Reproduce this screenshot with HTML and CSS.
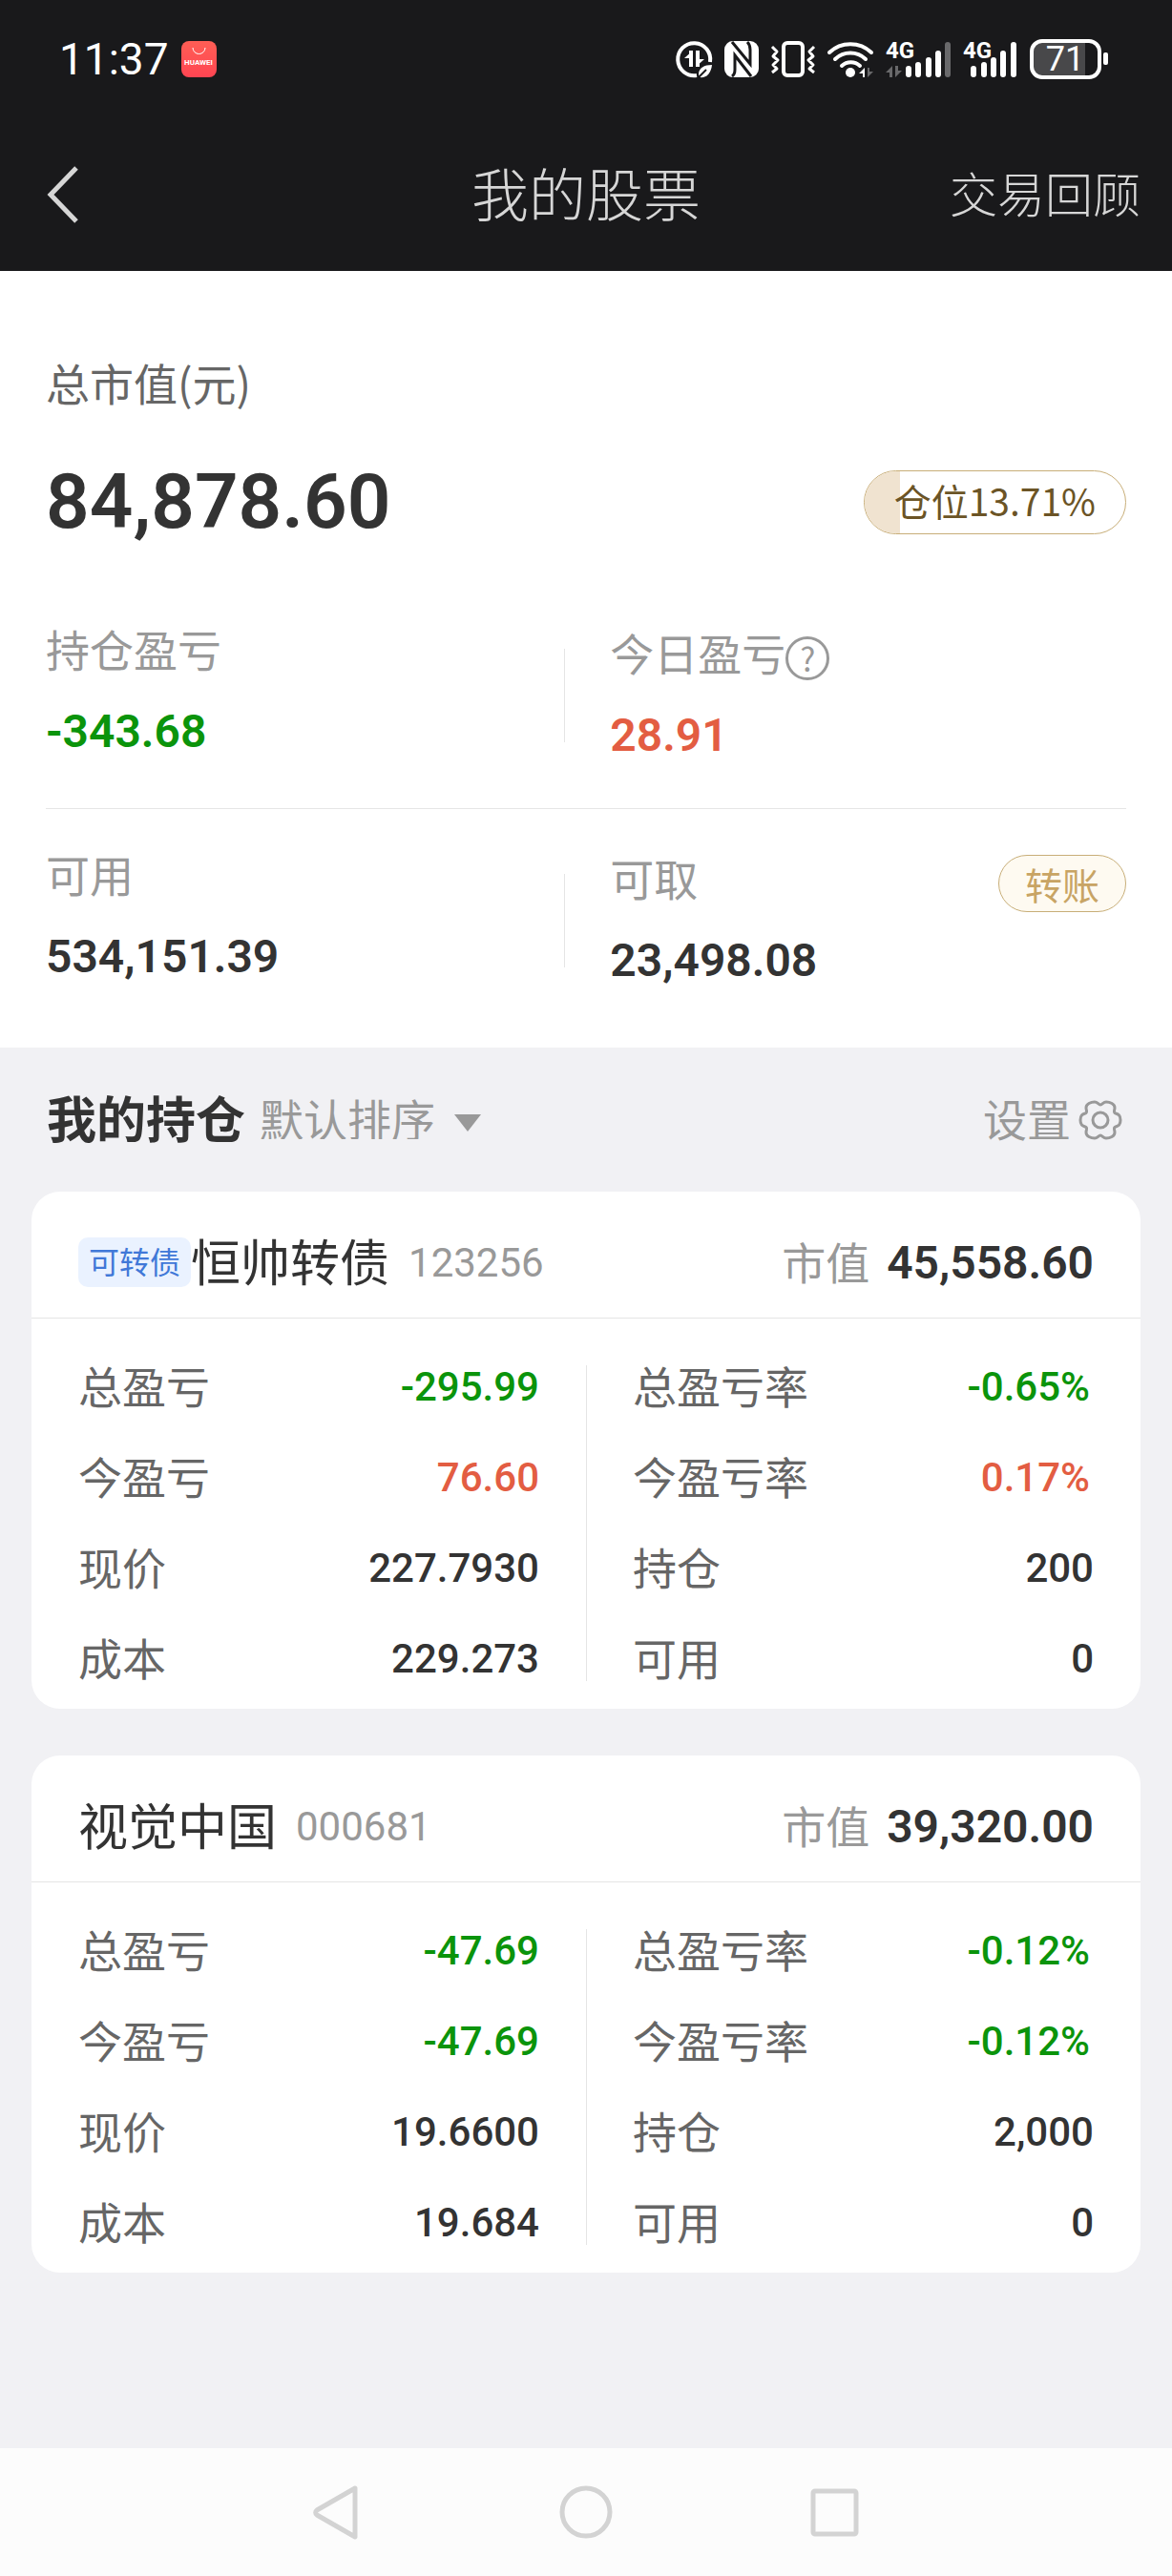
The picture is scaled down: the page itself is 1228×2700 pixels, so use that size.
FILE: index.html
```html
<!DOCTYPE html>
<html lang="zh-CN">
  <head>
    <meta charset="UTF-8" />
    <meta name="viewport" content="width=device-width, initial-scale=1.0" />
    <title>我的股票</title>
    <link rel="stylesheet" href="styles.css">
  </head>
  <body>
    <header class="top">
        <div class="status-bar">
            <span class="clock">11:37</span>
            <svg class="app-icon" width="37" height="38" viewBox="0 0 37 38">
                <defs>
                    <linearGradient id="red" x1="0" y1="0" x2="0" y2="1">
                        <stop offset="0" stop-color="#ff5e55" />
                        <stop offset="1" stop-color="#ff4552" />
                    </linearGradient>
                </defs>
                <rect width="37" height="38" rx="8" fill="url(#red)" />
                <path d="M12 7a6 6 0 0 0 13 0" fill="none" stroke="#fff" stroke-width="1" />
                <text x="18" y="25" text-anchor="middle" class="app-name">HUAWEI</text>
            </svg>

            <div class="status-icons">
                <svg width="38" height="39" viewBox="0 0 38 39" fill="none" stroke="#fff">
                    <path d="M36 22A17 17 0 1 0 22 36" stroke-width="4" />
                    <path d="M16 10v17M23 10v17" stroke-width="4" />
                    <path d="M18 10l-9 8h9zM21 27l9-8h-9z" fill="#fff" stroke="none" />
                    <path d="M38 25c-8 0-14 3-14 10l1 3c7 1 12-4 13-13z" fill="#fff" stroke="none" />
                    <path d="M24 38l8-8" stroke="#19191b" stroke-width="2" />
                </svg>
                <svg width="36" height="38" viewBox="0 0 36 38">
                    <rect width="36" height="38" rx="9" fill="#fff" />
                    <path d="M8 1l19 23V9q0-5-3-8M28 37L11 15v15q0 5-3 7" fill="none" stroke="#19191b" stroke-width="3" />
                </svg>
                <svg width="46" height="38" viewBox="0 0 46 38" fill="none" stroke="#fff" stroke-width="4" stroke-linejoin="round">
                    <rect x="13" y="2" width="20" height="34" rx="4" />
                    <path d="M1 6l5 5-4 5 5 4-5 5 4 4-5 4M45 6l-5 5 4 5-5 4 5 5-4 4 5 4" stroke-width="3" />
                </svg>
                <svg width="48" height="39" viewBox="0 0 48 39" fill="none" stroke="#fff" stroke-width="4" stroke-linecap="round">
                    <path d="M2 12a32 32 0 0 1 44 0M8 19a23 23 0 0 1 32 0M15 26a14 14 0 0 1 19 0" />
                    <circle cx="24" cy="33" r="5" fill="#fff" stroke="none" />
                    <path d="M39 28v10h-2v-4h-4z" fill="#fff" stroke="none" />
                    <path d="M42 38V28h2v4h4z" fill="#69696b" stroke="none" />
                </svg>
                <svg width="68" height="39" viewBox="0 0 68 39" stroke="#fff" stroke-width="6" stroke-linecap="round">
                    <text x="0" y="18" class="net">4G</text>
                    <path d="M7 26v12H4v-5H0zM10 38V26h3v5h4z" fill="#69696b" stroke="none" />
                    <path d="M24 29v6M34 25v10M45 20v15M55 13v22" />
                    <path d="M65 4v31" stroke="#69696b" />
                </svg>
                <svg width="57" height="39" viewBox="0 0 57 39" stroke="#fff" stroke-width="6" stroke-linecap="round">
                    <text x="0" y="18" class="net">4G</text>
                    <path d="M11 29v6M22 25v10M32 20v15M42 13v22M53 4v31" />
                </svg>
                <svg width="82" height="42" viewBox="0 0 82 42">
                    <path d="M13 3h45v36H13A10 10 0 0 1 3 29V13A10 10 0 0 1 13 3z" fill="#48484a" />
                    <rect x="2" y="2" width="71" height="38" rx="11" fill="none" stroke="#fff" stroke-width="4" />
                    <rect x="77" y="14" width="5" height="13" rx="2" fill="#fff" />
                    <text x="37" y="33" text-anchor="middle" class="percent">71</text>
                </svg>
            </div>
        </div>

        <nav class="title-bar">
            <button class="back" aria-label="返回">
                <svg width="34" height="60" viewBox="0 0 34 60" fill="none" stroke="#d6d6d6" stroke-width="5">
                    <path d="M31 2L4 30l27 28" />
                </svg>
            </button>
            <h1>我的股票</h1>
            <a class="review" href="#review">交易回顾</a>
        </nav>
    </header>

    <main>
        <section class="summary">
            <div class="total-label">总市值(元)</div>
            <div class="total-row">
                <strong class="total">84,878.60</strong>
                <div class="position"><span class="position-fill" style="width: 13.71%"></span><span class="position-text">仓位13.71%</span></div>
            </div>

            <div class="stats">
                <div class="stat">
                    <div class="stat-label">持仓盈亏</div>
                    <div class="stat-value down">-343.68</div>
                </div>
                <div class="stat">
                    <div class="stat-label">今日盈亏<button class="help" aria-label="说明">?</button></div>
                    <div class="stat-value up">28.91</div>
                </div>
            </div>
            <div class="stats">
                <div class="stat">
                    <div class="stat-label">可用</div>
                    <div class="stat-value">534,151.39</div>
                </div>
                <div class="stat">
                    <div class="stat-label">可取<button class="transfer">转账</button></div>
                    <div class="stat-value">23,498.08</div>
                </div>
            </div>
        </section>

        <section class="holdings">
            <div class="holdings-head">
                <h2>我的持仓</h2>
                <label class="sort">
                    <select aria-label="排序">
                        <option>默认排序</option>
                    </select>
                </label>
                <button class="settings">
                    <span>设置</span>
                    <svg width="46" height="42" viewBox="0 0 46 42" fill="none" stroke="#999" stroke-width="3" stroke-linejoin="round">
                        <path d="M23 5C25 5 26 2 29 2C33 2 38 4 38 8C38 11 36 13 39 14C42 15 44 16 44 21C44 26 42 27 39 28C36 29 38 31 38 34C38 38 33 40 29 40C26 40 25 37 23 37C21 37 20 40 17 40C13 40 8 38 8 34C8 31 10 29 7 28C4 27 2 26 2 21C2 16 4 15 7 14C10 13 8 11 8 8C8 4 13 2 17 2C20 2 21 5 23 5Z" />
                        <circle cx="23" cy="21" r="8" />
                    </svg>
                </button>
            </div>

            <article class="card">
                <div class="card-head">
                    <span class="tag">可转债</span>
                    <h3>恒帅转债</h3>
                    <span class="code">123256</span>
                    <span class="worth-label">市值</span>
                    <strong class="worth">45,558.60</strong>
                </div>
                <div class="card-body">
                    <dl>
                        <div><dt>总盈亏</dt><dd class="down">-295.99</dd></div>
                        <div><dt>今盈亏</dt><dd class="up">76.60</dd></div>
                        <div><dt>现价</dt><dd>227.7930</dd></div>
                        <div><dt>成本</dt><dd>229.273</dd></div>
                    </dl>
                    <dl>
                        <div><dt>总盈亏率</dt><dd class="down rate">-0.65%</dd></div>
                        <div><dt>今盈亏率</dt><dd class="up rate">0.17%</dd></div>
                        <div><dt>持仓</dt><dd>200</dd></div>
                        <div><dt>可用</dt><dd>0</dd></div>
                    </dl>
                </div>
            </article>

            <article class="card">
                <div class="card-head">
                    <h3>视觉中国</h3>
                    <span class="code">000681</span>
                    <span class="worth-label">市值</span>
                    <strong class="worth">39,320.00</strong>
                </div>
                <div class="card-body">
                    <dl>
                        <div><dt>总盈亏</dt><dd class="down">-47.69</dd></div>
                        <div><dt>今盈亏</dt><dd class="down">-47.69</dd></div>
                        <div><dt>现价</dt><dd>19.6600</dd></div>
                        <div><dt>成本</dt><dd>19.684</dd></div>
                    </dl>
                    <dl>
                        <div><dt>总盈亏率</dt><dd class="down rate">-0.12%</dd></div>
                        <div><dt>今盈亏率</dt><dd class="down rate">-0.12%</dd></div>
                        <div><dt>持仓</dt><dd>2,000</dd></div>
                        <div><dt>可用</dt><dd>0</dd></div>
                    </dl>
                </div>
            </article>
        </section>
    </main>

    <footer class="system-nav">
        <button aria-label="返回">
            <svg width="56" height="60" viewBox="0 0 56 60"><path d="M47 5L7 28a3 3 0 0 0 0 5L47 56z" /></svg>
        </button>
        <button aria-label="主屏幕">
            <svg width="56" height="60" viewBox="0 0 56 60"><circle cx="28" cy="30" r="25" /></svg>
        </button>
        <button aria-label="最近任务">
            <svg width="56" height="60" viewBox="0 0 56 60"><rect x="5" y="8" width="45" height="45" rx="2" /></svg>
        </button>
    </footer>
  </body>
</html>
```
FILE: styles.css
```css
* {
    margin: 0;
    padding: 0;
    box-sizing: border-box;
}

body {
    min-height: 100vh;
    display: flex;
    flex-direction: column;
    font-family: "Noto Sans CJK SC", sans-serif;
    font-size: 46px;
    line-height: 1;
    color: #333;
    background: #f1f1f4;
}

main {
    flex: 1;
}

button, select {
    border: none;
    background: none;
    font: inherit;
    color: inherit;
    cursor: pointer;
}

svg {
    display: block;
    flex-shrink: 0;
    overflow: visible;
}

/* header */
.top {
    background: #19191b;
    color: #d6d6d6;
}

.status-bar {
    display: flex;
    align-items: center;
    height: 124px;
    padding: 0 67px 0 62px;
}

.clock {
    font-family: Roboto, sans-serif;
    font-size: 46px;
    color: #fff;
}

.app-icon {
    margin-left: 13px;
}

.app-name {
    font: 700 8px Roboto, sans-serif;
    fill: #fff;
}

.status-icons {
    display: flex;
    align-items: center;
    gap: 13px;
    margin-left: auto;
}

.net {
    font: 700 24px Roboto, sans-serif;
    fill: #fff;
    stroke: none;
}

.percent {
    font: 400 36px Roboto, sans-serif;
    fill: #fff;
}

.title-bar {
    display: grid;
    grid-template-columns: 1fr auto 1fr;
    align-items: center;
    height: 160px;
    padding: 0 33px;
    font-weight: 300;
}

.title-bar h1 {
    padding-bottom: 6px;
    font-size: 60px;
    font-weight: 300;
}

.back {
    justify-self: start;
    margin-left: 16px;
}

.review {
    justify-self: end;
    padding-bottom: 6px;
    font-size: 50px;
    color: inherit;
    text-decoration: none;
}

/* account summary */
.summary {
    padding: 93px 48px 45px;
    background: #fff;
}

.total-label {
    color: #666;
}

.total-row {
    display: flex;
    justify-content: space-between;
    align-items: center;
    height: 100px;
    margin: 53px 0 76px;
}

.total {
    font: 600 80px Roboto, sans-serif;
}

.position {
    position: relative;
    display: flex;
    align-items: center;
    height: 67px;
    padding: 0 31px;
    border: 1px solid #c8ae78;
    border-radius: 34px;
    overflow: hidden;
    font-size: 39px;
    color: #6b5426;
}

.position-fill {
    position: absolute;
    inset: 0 auto 0 0;
    background: #f0e3d0;
}

.position-text {
    position: relative;
    padding-bottom: 4px;
}

.stats {
    display: flex;
    align-items: center;
    padding-bottom: 52px;
}

.stats + .stats {
    padding: 40px 0 22px;
    border-top: 1px solid #e5e5e5;
}

.stat {
    width: 48%;
}

.stat + .stat {
    position: relative;
    flex: 1;
    padding: 8px 0 0 48px;
}

.stat + .stat::before {
    content: "";
    position: absolute;
    left: 0;
    top: 28px;
    height: 98px;
    border-left: 1px solid #e5e5e5;
}

.stat-label {
    display: flex;
    height: 60px;
    color: #999;
}

.stat-value {
    margin-top: 27px;
    font: 600 48px/48px Roboto, sans-serif;
}

.help {
    align-self: center;
    width: 46px;
    height: 46px;
    border: 3px solid #999;
    border-radius: 50%;
    font-size: 34px;
    line-height: 36px;
}

.transfer {
    height: 60px;
    margin-left: auto;
    padding: 0 27px;
    border: 1px solid #c8ae78;
    border-radius: 30px;
    background: #fefaf1;
    font-size: 39px;
    line-height: 52px;
    color: #c8a464;
}

.up {
    color: #e35d42;
}

.down {
    color: #0b940b;
}

/* holdings */
.holdings {
    padding: 0 33px;
}

.holdings-head {
    display: flex;
    align-items: center;
    height: 151px;
    padding: 0 16px;
    color: #999;
}

.holdings-head h2 {
    padding-bottom: 6px;
    font-size: 52px;
    font-weight: 700;
    color: #333;
}

.sort {
    display: flex;
    align-items: center;
    gap: 20px;
    margin-left: 15px;
}

.sort select {
    appearance: none;
    padding-bottom: 6px;
}

.sort::after {
    content: "";
    margin-top: 6px;
    border: 14px solid transparent;
    border-top: 18px solid #999;
    border-bottom: none;
}

.settings {
    display: flex;
    align-items: center;
    gap: 8px;
    margin-left: auto;
    padding-right: 3px;
}

.settings span {
    padding-bottom: 6px;
}

.card {
    margin-bottom: 49px;
    border-radius: 30px;
    background: #fff;
}

.card-head {
    display: flex;
    align-items: center;
    height: 133px;
    padding: 16px 49px 0;
    border-bottom: 1px solid #e5e5e5;
    color: #999;
}

.tag {
    padding: 8px 11px 12px;
    border-radius: 10px;
    background: #eaf2ff;
    font-size: 32px;
    color: #4078d8;
}

.card h3,
.worth-label {
    padding-bottom: 4px;
}

.card h3 {
    font-size: 52px;
    font-weight: 400;
    color: #333;
}

.code {
    margin-left: 20px;
    font: 400 42px Roboto, sans-serif;
}

.worth-label {
    margin-left: auto;
}

.worth {
    margin-left: 18px;
    font: 600 48px Roboto, sans-serif;
    color: #333;
}

.card-body {
    position: relative;
    display: flex;
    padding: 24px 0 5px;
}

.card-body::before {
    content: "";
    position: absolute;
    left: 50%;
    top: 49px;
    bottom: 29px;
    border-left: 1px solid #e5e5e5;
}

.card dl {
    flex: 1;
    padding: 0 49px;
}

.card dl div {
    display: flex;
    justify-content: space-between;
    align-items: center;
    height: 95px;
}

.card dt {
    padding-bottom: 6px;
    color: #666;
}

.card dd {
    font: 500 42px Roboto, sans-serif;
}

.card .rate {
    padding-right: 4px;
}

/* system navigation */
.system-nav {
    display: flex;
    justify-content: center;
    align-items: center;
    gap: 205px;
    height: 134px;
    background: #fcfcfc;
}

.system-nav svg {
    fill: none;
    stroke: #d3d3d3;
    stroke-width: 5;
    stroke-linejoin: round;
}
```
